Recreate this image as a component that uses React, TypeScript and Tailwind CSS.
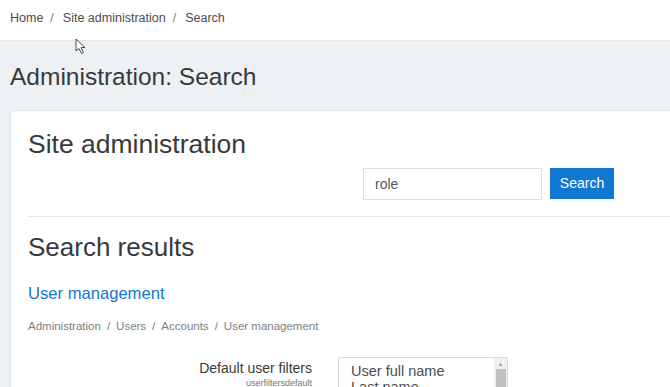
const crumbs = ['Home', 'Site administration', 'Search'];
const path = ['Administration', 'Users', 'Accounts', 'User management'];

function Cursor() {
  return (
    <svg className="absolute left-[75px] top-[38px]" width="12" height="17" viewBox="0 0 12 17">
      <path d="M1 1 L1 13 L4 10.5 L6.5 15.5 L8.5 14.5 L6 9.5 L10 9.5 Z" fill="#fff" stroke="#444" strokeWidth="1" strokeLinejoin="round" />
    </svg>
  );
}

export default function App() {
  return (
    <div className="relative h-[387px] w-[670px] overflow-hidden bg-[#eef1f4] font-['Liberation_Sans',Arial,sans-serif] text-[#373a3c]">
      <div className="flex h-[41px] items-start border-b border-[#e3e6ea] bg-white pl-[10px] pt-[9px] text-[12.5px] text-[#4a4d50]">
        {crumbs.map((c, i) => (
          <span key={c} className="flex">
            {i > 0 && <span className="pl-[7px] pr-[9px] text-[#777]">/</span>}
            <span>{c}</span>
          </span>
        ))}
      </div>
      <Cursor />
      <h1 className="pl-[10px] pt-[23px] text-[24.5px] leading-[26px] text-[#373a3c]">Administration: Search</h1>
      <div className="ml-[10px] mt-[20px] w-[700px] rounded-[4px] border border-[#dfe3e8] bg-white pl-[17px] pt-[18px]">
        <h2 className="text-[26.5px] leading-[30px]">Site administration</h2>
        <div className="ml-[335px] mt-[9px] flex gap-[8px]">
          <div className="flex h-[32px] w-[179px] items-center border border-[#dcdfe2] pl-[11px] text-[14px] text-[#55595c]">role</div>
          <button className="h-[31px] w-[64px] bg-[#1177d1] text-[14px] text-white">Search</button>
        </div>
        <div className="mt-[16px] border-t border-[#e8e8e8]" />
        <h2 className="pt-[15px] text-[26px] leading-[30px]">Search results</h2>
        <a className="mt-[22px] block text-[16.6px] leading-[20px] text-[#1177d1]">User management</a>
        <div className="mt-[14px] flex text-[11.5px] text-[#7b7e81]">
          {path.map((p, i) => (
            <span key={p} className="flex">
              {i > 0 && <span className="px-[6px]">/</span>}
              <span>{p}</span>
            </span>
          ))}
        </div>
        <div className="mt-[24px] flex">
          <div className="w-[294px] pr-[10px] text-right">
            <div className="text-[14px] leading-[18px] text-[#373a3c]">Default user filters</div>
            <div className="text-[9px] leading-[13px] text-[#777]">userfiltersdefault</div>
          </div>
          <div className="ml-[16px] mt-[-2px] flex h-[60px] w-[170px] rounded-[2px] border border-[#d8dcdf]">
            <div className="flex-1 pl-[12px] pt-[5px] text-[14.5px] leading-[16px] text-[#4a4d50]">
              <div>User full name</div>
              <div>Last name</div>
            </div>
            <div className="flex w-[13px] flex-col items-center bg-[#f1f1f1]">
              <span className="mt-[3px] text-[6px] leading-[6px] text-[#a3a3a3]">▲</span>
              <div className="mt-[2px] h-[30px] w-[10px] bg-[#c1c1c1]" />
            </div>
          </div>
        </div>
      </div>
    </div>
  );
}
